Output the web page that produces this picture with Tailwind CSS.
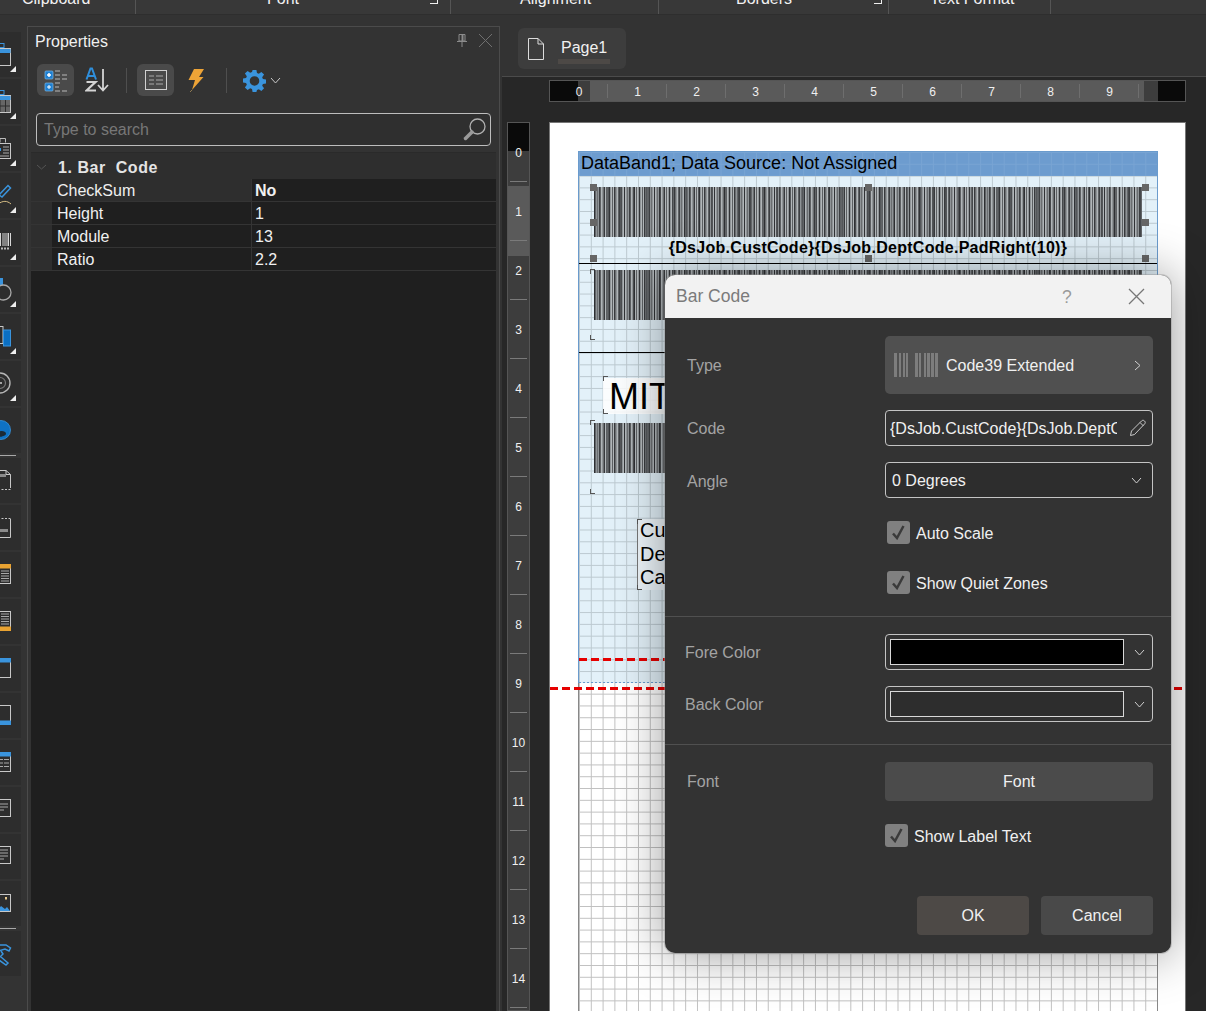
<!DOCTYPE html>
<html lang="en">
<head>
<meta charset="utf-8">
<title>Bar Code</title>
<script src="https://cdn.jsdelivr.net/npm/@tailwindcss/browser@4"></script>
</head>
<body class="m-0">
<div class="relative w-[1206px] h-[1011px] overflow-hidden bg-[#333333] font-['Liberation_Sans',Arial,sans-serif] text-[16px] text-[#f0f0f0] flex flex-col">

  <!-- ribbon remainder -->
  <div class="relative h-[15px] shrink-0 bg-[#383838] border-b border-[#2e2e2e] overflow-hidden flex text-[#f2f2f2]">
    <div class="w-[136px] h-full border-r border-[#555] relative"><span class="absolute left-[22px] top-[-13px]">Clipboard</span></div>
    <div class="w-[315px] h-full border-r border-[#555] relative"><span class="absolute left-[131px] top-[-13px]">Font</span><span class="absolute right-[12px] top-[-3px] w-[8px] h-[7px] border-r border-b border-[#eee]"></span></div>
    <div class="w-[208px] h-full border-r border-[#555] relative"><span class="absolute left-[69px] top-[-13px]">Alignment</span></div>
    <div class="w-[230px] h-full border-r border-[#555] relative"><span class="absolute left-[77px] top-[-13px]">Borders</span><span class="absolute right-[6px] top-[-3px] w-[8px] h-[7px] border-r border-b border-[#eee]"></span></div>
    <div class="w-[162px] h-full border-r border-[#555] relative"><span class="absolute left-[41px] top-[-13px]">Text Format</span></div>
  </div>

  <div class="flex flex-1 min-h-0">
    <!-- left tool strip -->
    <div class="w-[27px] shrink-0 pt-[17px] flex flex-col gap-[2px]">
      <div class="w-[21px] h-[45px] bg-[#2d2d2d]"><svg width="21" height="45" fill="none"><rect x="-3" y="11.5" width="7" height="4" stroke="#3a94dd"/><rect x="-3" y="16.5" width="13.5" height="17" stroke="#c8c8c8"/><rect x="-3" y="17" width="13.5" height="4" fill="#3a94dd"/><polygon points="10,40 16,40 16,34" fill="#eee"/></svg></div>
      <div class="w-[21px] h-[45px] bg-[#2d2d2d]"><svg width="21" height="45" fill="none"><rect x="-3" y="11.5" width="7" height="4" stroke="#3a94dd"/><rect x="-3" y="16.5" width="13.5" height="17" fill="#666" stroke="#c8c8c8"/><rect x="-3" y="17" width="13.5" height="4" fill="#3a94dd"/><path d="M0 21v12M5.5 21v12M-3 27h13" stroke="#2d2d2d"/><polygon points="10,40 16,40 16,34" fill="#eee"/></svg></div>
      <div class="w-[21px] h-[45px] bg-[#2d2d2d]"><svg width="21" height="45" fill="none"><path d="M0 16.5V12.5H5.5V16.5" stroke="#bbb"/><rect x="-3" y="17.5" width="13.5" height="15" stroke="#c8c8c8"/><path d="M3 21h6M3 24h6M3 27h6M-2 30h11" stroke="#aaa"/><rect x="-2" y="22" width="3" height="3" fill="#3a94dd"/><polygon points="10,40 16,40 16,34" fill="#eee"/></svg></div>
      <div class="w-[21px] h-[45px] bg-[#2d2d2d]"><svg width="21" height="45" fill="none"><path d="M-1 22L8 12.5L10.5 15L2 24Z" stroke="#3a94dd" stroke-width="1.5"/><path d="M-2 31C3 27.5 7 27.5 11 31" stroke="#d6bd84"/><polygon points="10,40 16,40 16,34" fill="#eee"/></svg></div>
      <div class="w-[21px] h-[45px] bg-[#2d2d2d]"><svg width="21" height="45" fill="none"><path d="M0.5 13v13M3 13v13M5 13v13M7 13v13M8.5 13v13M10.5 13v13" stroke="#d8d8d8"/><path d="M1 28.5h9" stroke="#bbb" stroke-width="2" stroke-dasharray="2 1"/><polygon points="10,40 16,40 16,34" fill="#eee"/></svg></div>
      <div class="w-[21px] h-[45px] bg-[#2d2d2d]"><svg width="21" height="45" fill="none"><rect x="-4" y="11" width="7" height="7" fill="#3a94dd"/><circle cx="3.500" cy="25.500" r="7.500" stroke="#a8a8a8" stroke-width="1.300"/><polygon points="10,40 16,40 16,34" fill="#eee"/></svg></div>
      <div class="w-[21px] h-[45px] bg-[#2d2d2d]"><svg width="21" height="45" fill="none"><rect x="-3" y="12.5" width="6" height="17" stroke="#c8c8c8"/><rect x="3.5" y="16" width="7" height="16" fill="#0b6fc2" stroke="#3a94dd"/><polygon points="10,40 16,40 16,34" fill="#eee"/></svg></div>
      <div class="w-[21px] h-[45px] bg-[#2d2d2d]"><svg width="21" height="45" fill="none"><circle cx="0" cy="22" r="10" stroke="#b5b5b5" stroke-width="1.4"/><circle cx="0" cy="22" r="5.5" stroke="#777" stroke-width="1.2"/><circle cx="1" cy="22" r="1" fill="#ccc"/><polygon points="10,40 16,40 16,34" fill="#eee"/></svg></div>
      <div class="w-[21px] h-[45px] bg-[#2d2d2d]"><svg width="21" height="45" fill="none"><circle cx="1" cy="22" r="9.5" fill="#0f72c4" stroke="#3a94dd" stroke-width=".8"/><path d="M-2 24C1 22 6 23 6 25.500C6 28 3 27.500 1 29L-3 27Z" fill="#1c2a36"/></svg></div>
      <div class="w-[16px] h-px bg-[#a8a8a8]"></div>
      <div class="w-[21px] h-[45px] bg-[#2d2d2d]"><svg width="21" height="45" fill="none"><path d="M-3 12.5H6L10.5 16.5V30" stroke="#c8c8c8"/><path d="M6 12.5V16.5H10.5" stroke="#c8c8c8"/><path d="M10.5 31.5H-3" stroke="#c8c8c8" stroke-dasharray="2 1.5"/><rect x="-3" y="16" width="9" height="3" fill="#8a8a8a"/></svg></div>
      <div class="w-[21px] h-[45px] bg-[#2d2d2d]"><svg width="21" height="45" fill="none"><path d="M10.5 14V32.5H-3" stroke="#c8c8c8"/><path d="M10.5 13.5H-3" stroke="#c8c8c8" stroke-dasharray="2 1.5"/><rect x="-3" y="24" width="11" height="3" fill="#8a8a8a"/></svg></div>
      <div class="w-[21px] h-[45px] bg-[#2d2d2d]"><svg width="21" height="45" fill="none"><rect x="-3" y="12.5" width="13.5" height="19" stroke="#c8c8c8"/><rect x="-3" y="12" width="14" height="4.5" fill="#e9a332"/><path d="M1 19h8M1 21.5h8M1 24h8M1 26.5h8M1 29h8" stroke="#a8a8a8"/></svg></div>
      <div class="w-[21px] h-[45px] bg-[#2d2d2d]"><svg width="21" height="45" fill="none"><rect x="-3" y="12.5" width="13.5" height="19" stroke="#c8c8c8"/><rect x="-3" y="27.5" width="14" height="4.5" fill="#e9a332"/><path d="M1 15h8M1 17.5h8M1 20h8M1 22.5h8M1 25h8" stroke="#a8a8a8"/></svg></div>
      <div class="w-[21px] h-[45px] bg-[#2d2d2d]"><svg width="21" height="45" fill="none"><rect x="-3" y="12.5" width="13.5" height="19" stroke="#c8c8c8"/><rect x="-3" y="12" width="14" height="4.5" fill="#3a94dd"/></svg></div>
      <div class="w-[21px] h-[45px] bg-[#2d2d2d]"><svg width="21" height="45" fill="none"><rect x="-3" y="12.5" width="13.5" height="19" stroke="#c8c8c8"/><rect x="-3" y="27.5" width="14" height="4.5" fill="#3a94dd"/></svg></div>
      <div class="w-[21px] h-[45px] bg-[#2d2d2d]"><svg width="21" height="45" fill="none"><rect x="-3" y="12.5" width="13.5" height="19" stroke="#c8c8c8"/><rect x="-3" y="12" width="14" height="4.5" fill="#3a94dd"/><path d="M-2 19.5h5M4 19.5h5M-2 23h5M4 23h5M-2 26.5h5M4 26.5h5" stroke="#a8a8a8"/></svg></div>
      <div class="w-[21px] h-[45px] bg-[#2d2d2d]"><svg width="21" height="45" fill="none"><rect x="-3" y="12.5" width="13.5" height="17" stroke="#c8c8c8"/><path d="M-2 17h10M-2 20h10M-2 23h6" stroke="#a8a8a8"/></svg></div>
      <div class="w-[21px] h-[45px] bg-[#2d2d2d]"><svg width="21" height="45" fill="none"><rect x="-3" y="12.5" width="13.5" height="17" stroke="#c8c8c8"/><path d="M-2 16h10M-2 19h10M-2 22h10M-2 25h6" stroke="#a8a8a8"/></svg></div>
      <div class="w-[21px] h-[45px] bg-[#2d2d2d]"><svg width="21" height="45" fill="none"><rect x="-3" y="13.5" width="13.5" height="17" stroke="#c8c8c8"/><path d="M-3 30L1 25L5 28L7 26L10 30Z" fill="#3a94dd"/><rect x="5" y="16" width="2" height="2.5" fill="#e8c98c"/></svg></div>
      <div class="w-[16px] h-px bg-[#a8a8a8]"></div>
      <div class="w-[21px] h-[45px] bg-[#2d2d2d]"><svg width="21" height="45" fill="none" stroke="#3a94dd" stroke-width="1.5"><path d="M-2 14H6L10.5 17L9 20L5 18L-2 20"/><path d="M1 20L3 23L-1 27"/><path d="M1 26L8 32L6 34L-1 29"/></svg></div>
    </div>

    <!-- properties panel -->
    <div class="w-[473px] shrink-0 mt-[11px] border-t border-l border-r border-[#4b4b4b] pl-[3px] pr-[3px] flex flex-col">
      <div class="h-[125px] shrink-0 relative">
        <div class="absolute left-[4px] top-[3px]">Properties</div>
        <svg class="absolute right-[28px] top-[6px]" width="12" height="14" fill="none" stroke="#8b8b8b"><path d="M3 1.5H9V8H3Z"/><path d="M6.5 2V8" stroke="#8b8b8b" stroke-width="2"/><path d="M1 8.5H11M6 9V14"/></svg>
        <svg class="absolute right-[3px] top-[6px]" width="15" height="15" fill="none" stroke="#6f6f6f"><path d="M1 1L14 14M14 1L1 14"/></svg>
        <div class="absolute left-[6px] top-[37px] right-0 flex items-center h-[32px]">
          <div class="w-[37px] h-[32px] rounded-md bg-[#4a4a4a] flex items-center justify-center">
            <svg width="24" height="24" fill="none"><rect x="1" y="3" width="8" height="8" rx="1" fill="#1f7fd0" stroke="#7ab8e8" stroke-width=".7"/><path d="M3 7h4M5 5v4M3 19h4M5 17v4" stroke="#fff"/><rect x="1" y="15" width="8" height="8" rx="1" fill="#1f7fd0" stroke="#7ab8e8" stroke-width=".7"/><path d="M3 7h4M5 5v4M3 19h4M5 17v4" stroke="#fff"/><path d="M11 3h5M11 7h5M18 7h5M11 11h5M18 11h5M11 15h5M11 19h4M11 23h5M18 23h5" stroke="#b8b8b8"/></svg>
          </div>
          <svg class="ml-[11px]" width="24" height="26" fill="none"><path d="M1.5 12.5L5.5 1.5H7L11 12.5M3 9H9.5" stroke="#2f8fdc" stroke-width="2"/><path d="M1.5 15H10.5L1.5 23.5H11" stroke="#d4d4d4" stroke-width="2.2"/><path d="M18 2V23M13 18L18 23.5L23 18" stroke="#d4d4d4" stroke-width="1.8"/></svg>
          <div class="ml-[17px] w-px h-[25px] bg-[#4f4f4f]"></div>
          <div class="ml-[10px] w-[37px] h-[32px] rounded-md bg-[#4a4a4a] flex items-center justify-center">
            <svg width="22" height="20" fill="none"><rect x=".5" y=".5" width="21" height="19" stroke="#d0d0d0"/><path d="M4 6h5M4 10h5M4 14h5M11 6h7M11 10h7M11 14h7" stroke="#aaa" stroke-width="1.2"/></svg>
          </div>
          <svg class="ml-[13px]" width="18" height="24"><polygon points="7,1 17,1 12,9 16.5,9 5,22 8,12 1.5,12" fill="#eea437"/><path d="M5 22L3 24" stroke="#8f7a52"/></svg>
          <div class="ml-[21px] w-px h-[25px] bg-[#4f4f4f]"></div>
          <svg class="ml-[16px]" width="23" height="23" viewBox="0 0 24 24" fill="#3a94dd"><path fill-rule="evenodd" d="M10 1h4l.6 3.2 1.9.8L19.2 3 22 5.800l-2 2.700.8 1.900L24 11v4l-3.200.6-.8 1.900 2 2.700-2.800 2.800-2.700-2-1.900.8L14 24h-4l-.6-3.200-1.900-.8-2.700 2L2 19.200l2-2.700-.8-1.900L0 14v-4l3.200-.6.8-1.900-2-2.700L4.800 2l2.700 2 1.900-.8zM12 7.500a5 5 0 100 10 5 5 0 000-10z"/></svg>
          <svg class="ml-[4px]" width="11" height="7" fill="none" stroke="#c8c8c8"><path d="M1 1L5.500 6L10 1"/></svg>
        </div>
        <div class="absolute left-[5px] right-[5px] top-[86px] h-[33px] border border-[#bdbdbd] rounded-[4px] bg-[#2f2f2f] flex items-center pl-[7px] text-[#777]">
          Type to search
          <svg class="absolute right-[3px] top-[3px]" width="24" height="24" fill="none"><circle cx="14.500" cy="9.500" r="7.500" stroke="#b0b0b0" stroke-width="1.300"/><path d="M9 15L2.500 21.500" stroke="#9a9a9a" stroke-width="3.500" stroke-linecap="round"/></svg>
        </div>
      </div>
      <div class="flex-1 bg-[#1f1f1f] border-t border-[#2a2a2a]">
        <div class="h-[26px] bg-[#2e2e2e] flex items-center pt-[3px] font-bold text-[#e4e4e4] relative pl-[27px] tracking-[0.55px]">
          <svg class="absolute left-[5px] top-[11px]" width="11" height="6" fill="none" stroke="#555"><path d="M1 1L5.500 5L10 1"/></svg>
          <span class="whitespace-pre">1. Bar  Code</span>
        </div>
        <div class="h-[23px] flex border-b border-[#343434] bg-[#2e2e2e]">
          <div class="w-[220px] pl-[26px] pt-[2px] flex items-center">CheckSum</div>
          <div class="flex-1 bg-[#1f1f1f] border-l border-[#343434] pl-[3px] pt-[2px] flex items-center font-bold">No</div>
        </div>
        <div class="h-[23px] flex border-b border-[#343434] bg-[#2e2e2e]">
          <div class="w-[199px] ml-[21px] pl-[5px] pt-[2px] bg-[#1f1f1f] flex items-center shrink-0">Height</div>
          <div class="flex-1 bg-[#1f1f1f] border-l border-[#343434] pl-[3px] pt-[2px] flex items-center">1</div>
        </div>
        <div class="h-[23px] flex border-b border-[#343434] bg-[#2e2e2e]">
          <div class="w-[199px] ml-[21px] pl-[5px] pt-[2px] bg-[#1f1f1f] flex items-center shrink-0">Module</div>
          <div class="flex-1 bg-[#1f1f1f] border-l border-[#343434] pl-[3px] pt-[2px] flex items-center">13</div>
        </div>
        <div class="h-[23px] flex border-b border-[#343434] bg-[#2e2e2e]">
          <div class="w-[199px] ml-[21px] pl-[5px] pt-[2px] bg-[#1f1f1f] flex items-center shrink-0">Ratio</div>
          <div class="flex-1 bg-[#1f1f1f] border-l border-[#343434] pl-[3px] pt-[2px] flex items-center">2.2</div>
        </div>
      </div>
    </div>

    <!-- design area -->
    <div class="flex-1 min-w-0 pl-[2px] flex flex-col">
      <div class="h-[61px] shrink-0 pl-[16px] pt-[13px]">
        <div class="w-[108px] h-[41px] rounded-md bg-[#3d3d3d] flex items-center pl-[9px] relative">
          <svg width="18" height="24" fill="none" stroke="#dcdcdc"><path d="M1.500 1.500H11L16.500 7V22.500H1.500Z"/><path d="M11 1.500V7H16.500"/></svg>
          <span class="ml-[16px] pb-[2px]">Page1</span>
          <span class="absolute left-[40px] top-[31px] w-[52px] h-[5px] bg-[#4d4946]"></span>
        </div>
      </div>
      <div class="flex-1 min-h-0 bg-[#272727] border-t border-[#4b4b4b] flex flex-col">
        <!-- horizontal ruler -->
        <div class="ml-[47px] mt-[3px] w-[637px] h-[22px] shrink-0 border border-[#555] bg-[linear-gradient(90deg,#0a0a0a_28px,#3d3d3d_28px_40px,#5a5a5a_40px_594px,#3d3d3d_594px_608px,#0a0a0a_608px)] flex text-[12px] text-[#f0f0f0]">
          <span class="w-[58px] shrink-0 pt-px flex items-center justify-center relative after:absolute after:right-0 after:top-[3px] after:bottom-[3px] after:w-px after:bg-[#6e6e6e]">0</span>
          <span class="w-[59px] shrink-0 pt-px flex items-center justify-center relative after:absolute after:right-0 after:top-[3px] after:bottom-[3px] after:w-px after:bg-[#6e6e6e]">1</span>
          <span class="w-[59px] shrink-0 pt-px flex items-center justify-center relative after:absolute after:right-0 after:top-[3px] after:bottom-[3px] after:w-px after:bg-[#6e6e6e]">2</span>
          <span class="w-[59px] shrink-0 pt-px flex items-center justify-center relative after:absolute after:right-0 after:top-[3px] after:bottom-[3px] after:w-px after:bg-[#6e6e6e]">3</span>
          <span class="w-[59px] shrink-0 pt-px flex items-center justify-center relative after:absolute after:right-0 after:top-[3px] after:bottom-[3px] after:w-px after:bg-[#6e6e6e]">4</span>
          <span class="w-[59px] shrink-0 pt-px flex items-center justify-center relative after:absolute after:right-0 after:top-[3px] after:bottom-[3px] after:w-px after:bg-[#6e6e6e]">5</span>
          <span class="w-[59px] shrink-0 pt-px flex items-center justify-center relative after:absolute after:right-0 after:top-[3px] after:bottom-[3px] after:w-px after:bg-[#6e6e6e]">6</span>
          <span class="w-[59px] shrink-0 pt-px flex items-center justify-center relative after:absolute after:right-0 after:top-[3px] after:bottom-[3px] after:w-px after:bg-[#6e6e6e]">7</span>
          <span class="w-[59px] shrink-0 pt-px flex items-center justify-center relative after:absolute after:right-0 after:top-[3px] after:bottom-[3px] after:w-px after:bg-[#6e6e6e]">8</span>
          <span class="w-[59px] shrink-0 pt-px flex items-center justify-center relative after:absolute after:right-0 after:top-[3px] after:bottom-[3px] after:w-px after:bg-[#6e6e6e]">9</span>
        </div>
        <div class="flex flex-1 min-h-0 mt-[20px]">
          <!-- vertical ruler -->
          <div class="ml-[5px] w-[23px] shrink-0 border border-[#555] bg-[linear-gradient(180deg,#0a0a0a_28px,#3d3d3d_28px_63px,#5a5a5a_63px_133px,#3d3d3d_133px)] flex flex-col text-[12px] text-[#f0f0f0]">
            <span class="h-[59px] shrink-0 flex items-center justify-center relative after:absolute after:left-[2px] after:right-[2px] after:bottom-0 after:h-px after:bg-[#7a7a7a]">0</span>
            <span class="h-[59px] shrink-0 flex items-center justify-center relative after:absolute after:left-[2px] after:right-[2px] after:bottom-0 after:h-px after:bg-[#7a7a7a]">1</span>
            <span class="h-[59px] shrink-0 flex items-center justify-center relative after:absolute after:left-[2px] after:right-[2px] after:bottom-0 after:h-px after:bg-[#7a7a7a]">2</span>
            <span class="h-[59px] shrink-0 flex items-center justify-center relative after:absolute after:left-[2px] after:right-[2px] after:bottom-0 after:h-px after:bg-[#7a7a7a]">3</span>
            <span class="h-[59px] shrink-0 flex items-center justify-center relative after:absolute after:left-[2px] after:right-[2px] after:bottom-0 after:h-px after:bg-[#7a7a7a]">4</span>
            <span class="h-[59px] shrink-0 flex items-center justify-center relative after:absolute after:left-[2px] after:right-[2px] after:bottom-0 after:h-px after:bg-[#7a7a7a]">5</span>
            <span class="h-[59px] shrink-0 flex items-center justify-center relative after:absolute after:left-[2px] after:right-[2px] after:bottom-0 after:h-px after:bg-[#7a7a7a]">6</span>
            <span class="h-[59px] shrink-0 flex items-center justify-center relative after:absolute after:left-[2px] after:right-[2px] after:bottom-0 after:h-px after:bg-[#7a7a7a]">7</span>
            <span class="h-[59px] shrink-0 flex items-center justify-center relative after:absolute after:left-[2px] after:right-[2px] after:bottom-0 after:h-px after:bg-[#7a7a7a]">8</span>
            <span class="h-[59px] shrink-0 flex items-center justify-center relative after:absolute after:left-[2px] after:right-[2px] after:bottom-0 after:h-px after:bg-[#7a7a7a]">9</span>
            <span class="h-[59px] shrink-0 flex items-center justify-center relative after:absolute after:left-[2px] after:right-[2px] after:bottom-0 after:h-px after:bg-[#7a7a7a]">10</span>
            <span class="h-[59px] shrink-0 flex items-center justify-center relative after:absolute after:left-[2px] after:right-[2px] after:bottom-0 after:h-px after:bg-[#7a7a7a]">11</span>
            <span class="h-[59px] shrink-0 flex items-center justify-center relative after:absolute after:left-[2px] after:right-[2px] after:bottom-0 after:h-px after:bg-[#7a7a7a]">12</span>
            <span class="h-[59px] shrink-0 flex items-center justify-center relative after:absolute after:left-[2px] after:right-[2px] after:bottom-0 after:h-px after:bg-[#7a7a7a]">13</span>
            <span class="h-[59px] shrink-0 flex items-center justify-center relative after:absolute after:left-[2px] after:right-[2px] after:bottom-0 after:h-px after:bg-[#7a7a7a]">14</span>
          </div>
          <!-- report page -->
          <div class="ml-[19px] w-[637px] bg-white border-t border-l border-r border-[#777] relative pl-[28px] pt-[28px] text-black">
            <div class="w-[580px] h-[860px] border-x border-[#888] bg-[linear-gradient(#c0c0c0_1px,transparent_1px),linear-gradient(90deg,#c0c0c0_1px,transparent_1px)] bg-[size:11.8px_11.8px] relative">
              <div class="absolute -left-px -right-px top-0 h-[532px] border-x border-t border-[#6a9bcd] bg-[#e3f1f9] bg-[linear-gradient(#bcc9d0_1px,transparent_1px),linear-gradient(90deg,#bcc9d0_1px,transparent_1px)] bg-[size:11.8px_11.8px]">
                <div class="h-[24px] bg-[#6d9ccf] bg-[linear-gradient(#78a4d3_1px,transparent_1px),linear-gradient(90deg,#78a4d3_1px,transparent_1px)] bg-[size:11.8px_11.8px] pl-[2px] text-[18px] leading-[23px] whitespace-nowrap">DataBand1; Data Source: Not Assigned</div>

                <div class="absolute left-[15px] top-[35px] w-[548px] h-[50px] bg-[repeating-linear-gradient(90deg,rgba(40,42,45,0.85)_0_1px,transparent_1px_5px),repeating-linear-gradient(90deg,rgba(60,62,65,0.6)_0_1px,transparent_1px_3px),repeating-linear-gradient(90deg,rgba(45,47,50,0.6)_0_2px,transparent_2px_13px),repeating-linear-gradient(90deg,#8f9497_0_1px,#b1b6b9_1px_2px)]"></div>
                <div class="absolute left-0 right-0 top-[84px] text-center font-bold text-[16px] leading-[24px] tracking-[0.28px] whitespace-nowrap">{DsJob.CustCode}{DsJob.DeptCode.PadRight(10)}</div>
                <span class="absolute left-[11px] top-[32px] w-[7px] h-[7px] bg-[#666]"></span>
                <span class="absolute left-[11px] top-[67px] w-[7px] h-[7px] bg-[#666]"></span>
                <span class="absolute left-[11px] top-[103px] w-[7px] h-[7px] bg-[#666]"></span>
                <span class="absolute left-[286px] top-[32px] w-[7px] h-[7px] bg-[#666]"></span>
                <span class="absolute left-[286px] top-[103px] w-[7px] h-[7px] bg-[#666]"></span>
                <span class="absolute left-[563px] top-[32px] w-[7px] h-[7px] bg-[#666]"></span>
                <span class="absolute left-[563px] top-[67px] w-[7px] h-[7px] bg-[#666]"></span>
                <span class="absolute left-[563px] top-[103px] w-[7px] h-[7px] bg-[#666]"></span>
                <div class="absolute left-0 right-0 top-[111px] h-px bg-black"></div>

                <span class="absolute left-[11px] top-[117px] w-[5px] h-[5px] border-l border-t border-[#555]"></span>
                <div class="absolute left-[15px] top-[118px] w-[548px] h-[50px] bg-[repeating-linear-gradient(90deg,rgba(40,42,45,0.85)_0_1px,transparent_1px_5px),repeating-linear-gradient(90deg,rgba(60,62,65,0.6)_0_1px,transparent_1px_3px),repeating-linear-gradient(90deg,rgba(45,47,50,0.6)_0_2px,transparent_2px_13px),repeating-linear-gradient(90deg,#8f9497_0_1px,#b1b6b9_1px_2px)]"></div>
                <span class="absolute left-[11px] top-[183px] w-[5px] h-[5px] border-l border-b border-[#555]"></span>
                <div class="absolute left-0 right-0 top-[200px] h-px bg-black"></div>

                <div class="absolute left-[24px] top-[226px] w-[70px] h-[36px] bg-white/85 text-[36px] leading-[38px] pl-[6px]">MIT</div>
                <span class="absolute left-[24px] top-[224px] w-[5px] h-[5px] border-l border-t border-[#555]"></span>
                <span class="absolute left-[24px] top-[257px] w-[5px] h-[5px] border-l border-b border-[#555]"></span>
                <span class="absolute left-[11px] top-[268px] w-[5px] h-[5px] border-l border-t border-[#555]"></span>
                <div class="absolute left-[15px] top-[271px] w-[548px] h-[50px] bg-[repeating-linear-gradient(90deg,rgba(40,42,45,0.85)_0_1px,transparent_1px_5px),repeating-linear-gradient(90deg,rgba(60,62,65,0.6)_0_1px,transparent_1px_3px),repeating-linear-gradient(90deg,rgba(45,47,50,0.6)_0_2px,transparent_2px_13px),repeating-linear-gradient(90deg,#8f9497_0_1px,#b1b6b9_1px_2px)]"></div>
                <span class="absolute left-[11px] top-[337px] w-[5px] h-[5px] border-l border-b border-[#555]"></span>

                <div class="absolute left-[58px] top-[367px] w-[60px] h-[71px] bg-[#eef6fb] border-l border-[#777] text-[20px] leading-[23.500px] pl-[2px]">
                  <div>Cu</div><div>De</div><div>Ca</div>
                </div>
                <span class="absolute left-[58px] top-[367px] w-[5px] h-[5px] border-l border-t border-[#555]"></span>
                <span class="absolute left-[58px] top-[433px] w-[5px] h-[5px] border-l border-b border-[#555]"></span>

                <div class="absolute left-0 right-0 top-[506px] h-[3px] bg-[repeating-linear-gradient(90deg,#e60000_0_8px,transparent_8px_12px)]"></div>
                <div class="absolute left-0 right-0 bottom-0 h-px bg-[repeating-linear-gradient(90deg,#6a9bcd_0_2px,transparent_2px_4px)]"></div>
              </div>
            </div>
            <div class="absolute left-0 right-[2px] top-[564px] h-[3px] bg-[repeating-linear-gradient(90deg,#e60000_0_8px,transparent_8px_12px)]"></div>
          </div>
        </div>
      </div>
    </div>
  </div>

  <!-- Bar Code dialog -->
  <div class="absolute left-[665px] top-[275px] w-[506px] h-[678px] rounded-[10px] bg-[#333333] shadow-[0_0_0_1px_rgba(150,150,150,0.45),0_0_50px_rgba(0,0,0,0.42)] overflow-hidden flex flex-col">
    <div class="h-[43px] shrink-0 bg-[#f2f2f2] flex items-center pl-[11px] text-[17.500px] text-[#7b7b7b] relative">
      Bar Code
      <span class="absolute left-[397px] top-[9px] text-[#9a9a9a]">?</span>
      <svg class="absolute left-[463px] top-[13px]" width="17" height="17" fill="none" stroke="#777" stroke-width="1.300"><path d="M1 1L16 16M16 1L1 16"/></svg>
    </div>
    <div class="pt-[18px] flex flex-col">
      <div class="flex items-center h-[58px] pl-[22px]">
        <div class="w-[198px] pt-[2px] text-[#a3a3a3]">Type</div>
        <div class="w-[268px] h-[58px] rounded-[5px] bg-[#505050] flex items-center pl-[9px] relative">
          <svg width="44" height="24" fill="#7d7d7d"><path d="M0 0h3v24H0zM5 0h2v24H5zM9 0h2v24H9zM12 0h2v24h-2zM21 0h3v24h-3zM25 0h2v24h-2zM30 0h2v24h-2zM33 0h3v24h-3zM37 0h3v24h-3zM41 0h3v24h-3z"/></svg>
          <span class="ml-[8px] pt-[2px]">Code39 Extended</span>
          <svg class="absolute right-[12px] top-[24px]" width="7" height="11" fill="none" stroke="#d0d0d0"><path d="M1 1L6 5.500L1 10"/></svg>
        </div>
      </div>
      <div class="flex items-center h-[36px] pl-[22px] mt-[16px]">
        <div class="w-[198px] pt-[2px] text-[#a3a3a3]">Code</div>
        <div class="w-[268px] h-[36px] rounded-[4px] border border-[#c4c4c4] flex items-center pl-[4px] pt-[2px] relative">
          <span class="block w-[227px] overflow-hidden whitespace-nowrap">{DsJob.CustCode}{DsJob.DeptCode.PadRight(10)}</span>
          <svg class="absolute right-[6px] top-[8px]" width="17" height="18" fill="none" stroke="#c8c8c8"><path d="M1.500 16.500L2.500 12L12.500 2C13.500 1 14.500 1 15.500 2C16.500 3 16.500 4 15.500 5L5.500 15.500Z"/><path d="M11 3.500L14.500 7"/></svg>
        </div>
      </div>
      <div class="flex items-center h-[36px] pl-[22px] mt-[16px]">
        <div class="w-[198px] pt-[3px] text-[#a3a3a3]">Angle</div>
        <div class="w-[268px] h-[36px] rounded-[4px] border border-[#c4c4c4] bg-[#2d2d2d] flex items-center pl-[6px] pt-[1px] relative">
          0 Degrees
          <svg class="absolute right-[10px] top-[14px]" width="11" height="7" fill="none" stroke="#d0d0d0"><path d="M1 1L5.500 6L10 1"/></svg>
        </div>
      </div>
      <div class="flex items-center h-[23px] ml-[222px] mt-[23px]">
        <span class="w-[23px] h-[23px] rounded-[3px] bg-[#808080] flex items-center justify-center"><svg width="15" height="15" fill="none" stroke="#3a3a3a" stroke-width="2.500"><path d="M2 8.500L6 13L12.500 1"/></svg></span>
        <span class="ml-[6px] pt-[2px]">Auto Scale</span>
      </div>
      <div class="flex items-center h-[23px] ml-[222px] mt-[27px]">
        <span class="w-[23px] h-[23px] rounded-[3px] bg-[#808080] flex items-center justify-center"><svg width="15" height="15" fill="none" stroke="#3a3a3a" stroke-width="2.500"><path d="M2 8.500L6 13L12.500 1"/></svg></span>
        <span class="ml-[6px] pt-[2px]">Show Quiet Zones</span>
      </div>
      <div class="h-px bg-[#505050] mt-[22px]"></div>
      <div class="flex items-center h-[36px] pl-[20px] mt-[17px]">
        <div class="w-[200px] pt-[2px] text-[#a3a3a3]">Fore Color</div>
        <div class="w-[268px] h-[36px] rounded-[4px] border border-[#c4c4c4] relative pl-[4px] pt-[4px]">
          <div class="w-[234px] h-[26px] bg-black border border-[#d8d8d8]"></div>
          <svg class="absolute right-[7px] top-[14px]" width="11" height="7" fill="none" stroke="#d0d0d0"><path d="M1 1L5.500 6L10 1"/></svg>
        </div>
      </div>
      <div class="flex items-center h-[36px] pl-[20px] mt-[16px]">
        <div class="w-[200px] pt-[2px] text-[#a3a3a3]">Back Color</div>
        <div class="w-[268px] h-[36px] rounded-[4px] border border-[#c4c4c4] relative pl-[4px] pt-[4px]">
          <div class="w-[234px] h-[26px] bg-[#2d2d2d] border border-[#d8d8d8]"></div>
          <svg class="absolute right-[7px] top-[14px]" width="11" height="7" fill="none" stroke="#d0d0d0"><path d="M1 1L5.500 6L10 1"/></svg>
        </div>
      </div>
      <div class="h-px bg-[#505050] mt-[22px]"></div>
      <div class="flex items-center h-[39px] pl-[22px] mt-[17px]">
        <div class="w-[198px] text-[#a3a3a3]">Font</div>
        <div class="w-[268px] h-[39px] rounded-[4px] bg-[#4b4b4b] flex items-center justify-center">Font</div>
      </div>
      <div class="flex items-center h-[23px] ml-[220px] mt-[23px]">
        <span class="w-[23px] h-[23px] rounded-[3px] bg-[#808080] flex items-center justify-center"><svg width="15" height="15" fill="none" stroke="#3a3a3a" stroke-width="2.500"><path d="M2 8.500L6 13L12.500 1"/></svg></span>
        <span class="ml-[6px] pt-[2px]">Show Label Text</span>
      </div>
      <div class="flex justify-end gap-[12px] pr-[18px] mt-[49px]">
        <div class="w-[112px] h-[39px] rounded-[4px] bg-[#4d4946] flex items-center justify-center">OK</div>
        <div class="w-[112px] h-[39px] rounded-[4px] bg-[#494949] flex items-center justify-center">Cancel</div>
      </div>
    </div>
  </div>
</div>
</body>
</html>
